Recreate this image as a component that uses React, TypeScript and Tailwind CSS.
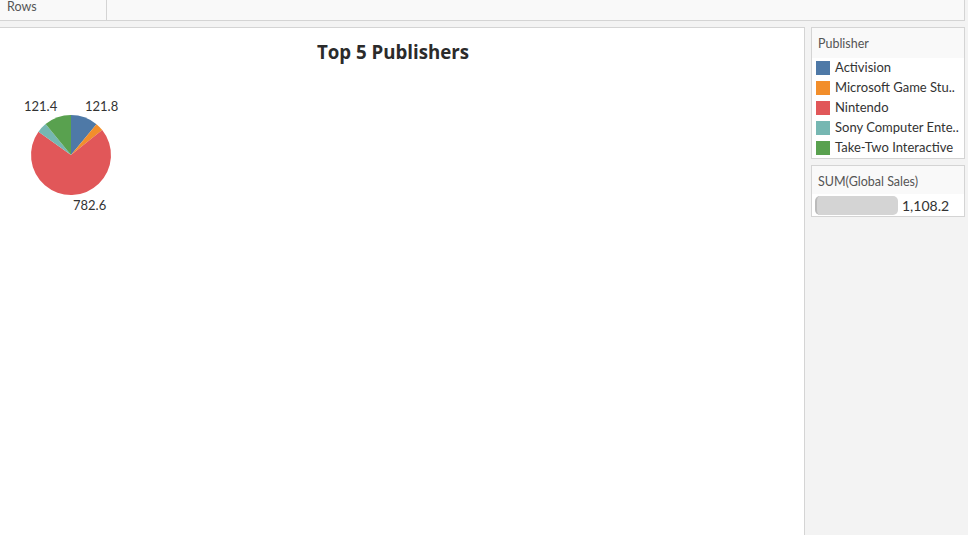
import React from "react";

const slices = [
  { name: "Activision", label: "Activision", value: 121.8, color: "#4e79a7" },
  { name: "Microsoft Game Studios", label: "Microsoft Game Stu..", value: 36.2, color: "#f28e2b" },
  { name: "Nintendo", label: "Nintendo", value: 782.6, color: "#e15759" },
  { name: "Sony Computer Entertainment", label: "Sony Computer Ente..", value: 46.2, color: "#76b7b2" },
  { name: "Take-Two Interactive", label: "Take-Two Interactive", value: 121.4, color: "#59a14f" },
];

const Pie = () => {
  const cx = 71;
  const cy = 154;
  const r = 40;
  const total = slices.reduce((s, x) => s + x.value, 0);
  let acc = 0;
  return (
    <svg width="140" height="130" className="absolute left-0 top-0 overflow-visible">
      {slices.map((s) => {
        const a0 = (acc / total) * Math.PI * 2;
        acc += s.value;
        const a1 = (acc / total) * Math.PI * 2;
        const x0 = cx + r * Math.sin(a0);
        const y0 = cy - r * Math.cos(a0);
        const x1 = cx + r * Math.sin(a1);
        const y1 = cy - r * Math.cos(a1);
        const large = a1 - a0 > Math.PI ? 1 : 0;
        return (
          <path
            key={s.name}
            d={`M${cx} ${cy} L${x0} ${y0} A${r} ${r} 0 ${large} 1 ${x1} ${y1} Z`}
            fill={s.color}
          />
        );
      })}
    </svg>
  );
};

export default function App() {
  return (
    <div
      className="w-[968px] h-[535px] bg-[#f3f3f3] flex flex-col overflow-hidden text-[#333]"
      style={{ fontFamily: "Lato, 'Open Sans', sans-serif" }}
    >
      {/* shelf */}
      <div className="h-[21px] w-[965px] flex bg-[#f9f9f9] border-b border-r border-[#d4d4d4] shrink-0">
        <div className="w-[107px] border-r border-[#d4d4d4] pl-[7px] text-[12.5px] leading-[14px] text-[#555]">
          Rows
        </div>
      </div>
      <div className="h-[6px] shrink-0" />
      <div className="flex flex-1 min-h-0">
        {/* view */}
        <div className="w-[805px] bg-white border-t border-r border-[#d4d4d4] relative">
          <div
            className="pt-[11px] pr-[18px] text-center text-[18.7px] leading-[26px] font-bold text-[#2b2b2b]"
            style={{ fontFamily: "'Open Sans', sans-serif" }}
          >
            Top 5 Publishers
          </div>
          <div className="absolute left-0 top-[-27px] w-[140px] h-[240px]">
            <Pie />
            <span className="absolute left-[24px] top-[97px] text-[13px] leading-[16px]">121.4</span>
            <span className="absolute left-[85px] top-[97px] text-[13px] leading-[16px]">121.8</span>
            <span className="absolute left-[73px] top-[196px] text-[13px] leading-[16px]">782.6</span>
          </div>
        </div>
        {/* legends */}
        <div className="flex flex-col gap-[6px] pl-[6px]">
          <div className="w-[154px] bg-white border border-[#d4d4d4]">
            <div className="h-[30px] bg-[#f9f9f9] pl-[6px] pt-[8px] text-[12.5px] leading-[15px] text-[#555]">
              Publisher
            </div>
            <div>
              {slices.map((s) => (
                <div key={s.name} className="h-[20px] flex items-center pl-[4px] gap-[5px]">
                  <span className="w-[14px] h-[14px] shrink-0" style={{ backgroundColor: s.color }} />
                  <span className="text-[13px] whitespace-nowrap">{s.label}</span>
                </div>
              ))}
            </div>
          </div>
          <div className="w-[154px] bg-white border border-[#d4d4d4]">
            <div className="h-[28px] bg-[#f9f9f9] pl-[6px] pt-[8px] text-[12.5px] leading-[15px] text-[#555]">
              SUM(Global Sales)
            </div>
            <div className="h-[22px] flex items-center pl-[3px] gap-[4px]">
              <span className="w-[83px] h-[19px] rounded-[5px] bg-[#d4d4d4] border-l-2 border-[#bbb] shrink-0" />
              <span className="text-[14px] whitespace-nowrap">1,108.2</span>
            </div>
          </div>
        </div>
      </div>
    </div>
  );
}
